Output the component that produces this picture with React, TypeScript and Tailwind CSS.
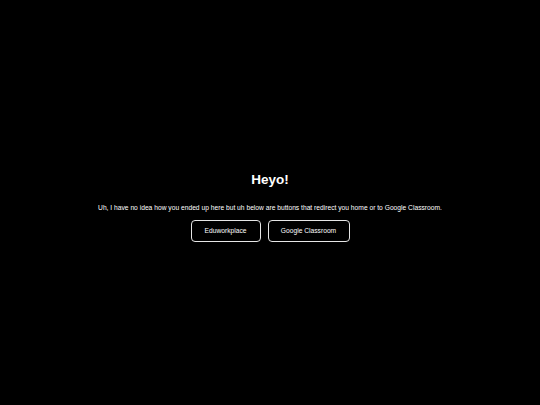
export default function App() {
  return (
    <div className="flex h-[405px] w-[540px] flex-col items-center justify-center bg-black pt-[10px] font-['Liberation_Sans',Arial,sans-serif] text-white">
      <h1 className="text-[13.5px] font-bold leading-none">Heyo!</h1>
      <p className="mt-[18px] text-[6.7px] leading-none">
        Uh, I have no idea how you ended up here but uh below are buttons that redirect you home or to Google Classroom.
      </p>
      <div className="mt-[8px] flex gap-[7px]">
        <button className="flex h-[22px] w-[70px] items-center justify-center rounded-[4px] border border-white/90 text-[6.7px]">
          Eduworkplace
        </button>
        <button className="flex h-[22px] w-[82px] items-center justify-center rounded-[4px] border border-white/90 text-[6.7px]">
          Google Classroom
        </button>
      </div>
    </div>
  );
}
